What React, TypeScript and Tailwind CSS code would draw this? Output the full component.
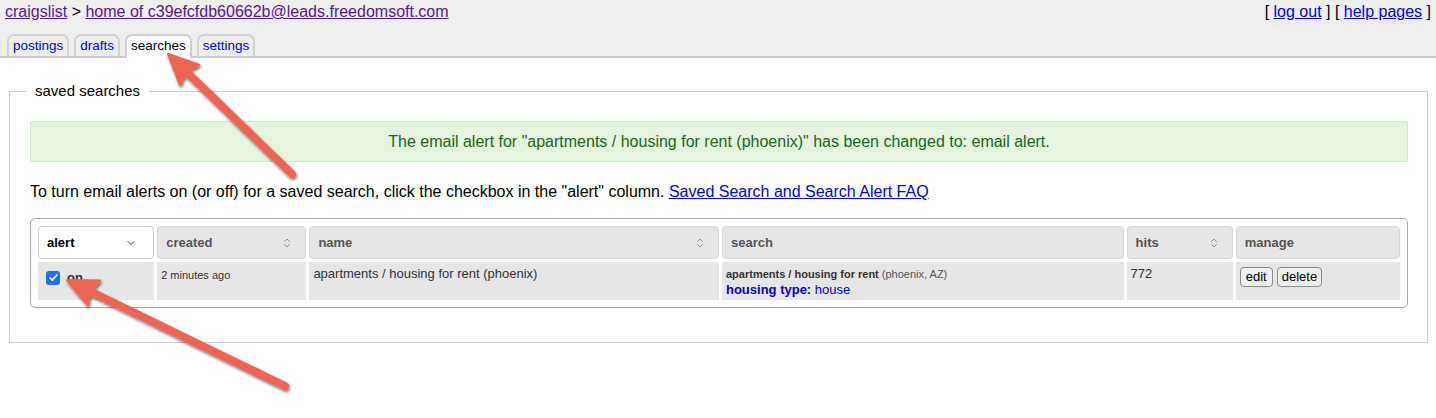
import React from 'react';
import { ChevronDown, ChevronsUpDown } from 'lucide-react';

const font = { fontFamily: '"Liberation Sans", Arial, Helvetica, sans-serif' };

type Pt = [number, number];

// annotation arrow drawn over the page
const Arrow: React.FC<{ tail: Pt; tip: Pt }> = ({ tail, tip }) => {
  const dx = tip[0] - tail[0];
  const dy = tip[1] - tail[1];
  const len = Math.hypot(dx, dy);
  const ux = dx / len;
  const uy = dy / len;
  const L = 30;
  const W = 14;
  const bx = tip[0] - ux * L;
  const by = tip[1] - uy * L;
  const pts = [
    `${tip[0]},${tip[1]}`,
    `${bx - uy * W},${by + ux * W}`,
    `${bx + ux * 4},${by + uy * 4}`,
    `${bx + uy * W},${by - ux * W}`,
  ].join(' ');
  return (
    <g filter="url(#shadow)">
      <line x1={tail[0]} y1={tail[1]} x2={bx + ux * 6} y2={by + uy * 6} stroke="#ef6453" strokeWidth={8} strokeLinecap="round" />
      <polygon points={pts} fill="#ef6453" stroke="#ef6453" strokeWidth={2} strokeLinejoin="round" />
    </g>
  );
};

const Tab: React.FC<{ label: string; active?: boolean }> = ({ label, active }) => (
  <div
    className={
      'px-[4px] border-2 border-b-0 rounded-t-[7px] text-[13.5px] leading-[16px] pt-[2px] ' +
      (active
        ? 'h-[24px] border-[#cfcfcf] bg-white text-black -mb-[2px]'
        : 'h-[22px] border-[#d2d2d2] bg-[#eeeeee] text-[#0000ee]')
    }
  >
    {label}
  </div>
);

const HeadCell: React.FC<{ label: string; icon?: 'down' | 'sort'; white?: boolean }> = ({ label, icon, white }) => (
  <th
    className={
      'h-[33px] px-[8px] text-left align-middle rounded-[4px] border ' +
      (white ? 'bg-white border-[#cfcfcf] text-black' : 'bg-[#e6e6e6] border-[#d8d8d8] text-[#555]')
    }
  >
    <div className="flex items-center justify-between">
      <span className="text-[13px] font-bold">{label}</span>
      {icon === 'down' && <ChevronDown className="w-[12px] h-[12px] mr-[8px] text-[#333]" strokeWidth={2} />}
      {icon === 'sort' && <ChevronsUpDown className="w-[12px] h-[12px] mr-[4px] text-[#777]" strokeWidth={1.5} />}
    </div>
  </th>
);

export default function App() {
  return (
    <div className="relative w-[1436px] h-[418px] bg-white text-black overflow-hidden" style={font}>
      <div className="bg-[#eeeeee] border-b-2 border-[#cccccc] h-[58px] flex flex-col justify-between">
        <div className="flex justify-between px-[5px] pt-[3px] text-[16px] leading-[18px]">
          <div>
            <a href="#" className="text-[#551a8b] underline">craigslist</a>
            <span> &gt; </span>
            <a href="#" className="text-[#551a8b] underline">home of c39efcfdb60662b@leads.freedomsoft.com</a>
          </div>
          <div>
            [ <a href="#" className="text-[#0000ee] underline">log out</a> ] [{' '}
            <a href="#" className="text-[#0000ee] underline">help pages</a> ]
          </div>
        </div>
        <div className="flex items-end gap-[5px] pl-[7px]">
          <Tab label="postings" />
          <Tab label="drafts" />
          <Tab label="searches" active />
          <Tab label="settings" />
        </div>
      </div>

      <fieldset className="mx-[9px] mt-[24px] border border-[#cccccc] pl-[20px] pr-[19px] pb-[34px] w-[1419px]">
        <legend className="ml-[-4px] px-[9px] text-[15px] leading-[18px]">saved searches</legend>

        <div className="mt-[21px] h-[41px] bg-[#e5f4df] border border-[#d0e9c6] rounded-[2px] flex items-center justify-center text-[16px] text-[#1c6619]">
          The email alert for "apartments / housing for rent (phoenix)" has been changed to: email alert.
        </div>

        <p className="mt-[21px] text-[16px] leading-[18px]">
          To turn email alerts on (or off) for a saved search, click the checkbox in the "alert" column.{' '}
          <a href="#" className="text-[#0000ee] underline">Saved Search and Search Alert FAQ</a>
        </p>

        <div className="mt-[17px] border border-[#aaaaaa] rounded-[5px] p-[4px]">
          <table className="w-full table-fixed border-separate border-spacing-[3px]">
            <colgroup>
              <col className="w-[116px]" />
              <col className="w-[149px]" />
              <col className="w-[409px]" />
              <col className="w-[401px]" />
              <col className="w-[106px]" />
              <col className="w-[164px]" />
            </colgroup>
            <thead>
              <tr>
                <HeadCell label="alert" icon="down" white />
                <HeadCell label="created" icon="sort" />
                <HeadCell label="name" icon="sort" />
                <HeadCell label="search" />
                <HeadCell label="hits" icon="sort" />
                <HeadCell label="manage" />
              </tr>
            </thead>
            <tbody>
              <tr className="align-top">
                <td className="h-[38px] bg-[#e6e6e6] pl-[8px] pt-[6px]">
                  <div className="flex items-center gap-[7px]">
                    <span className="w-[14px] h-[14px] rounded-[3px] bg-[#1a73e8] flex items-center justify-center">
                      <svg viewBox="0 0 12 12" className="w-[11px] h-[11px]">
                        <path d="M2.2 6.3 L4.8 8.8 L9.8 3.2" fill="none" stroke="white" strokeWidth="1.8" strokeLinecap="round" strokeLinejoin="round" />
                      </svg>
                    </span>
                    <span className="text-[13px] font-bold text-[#333]">on</span>
                  </div>
                </td>
                <td className="h-[38px] bg-[#e6e6e6] pl-[4px] pt-[6px] text-[11px] leading-[14px] text-[#333]">2 minutes ago</td>
                <td className="h-[38px] bg-[#e6e6e6] pl-[4px] pt-[4px] text-[13px] leading-[16px] text-[#333]">
                  apartments / housing for rent (phoenix)
                </td>
                <td className="h-[38px] bg-[#e6e6e6] pl-[4px] pt-[5px]">
                  <div className="text-[11px] leading-[14px] text-[#333]">
                    <span className="font-bold">apartments / housing for rent</span>{' '}
                    <span className="text-[#555]">(phoenix, AZ)</span>
                  </div>
                  <div className="mt-[1px] text-[13px] leading-[16px] text-[#0000cc]">
                    <span className="font-bold">housing type:</span> house
                  </div>
                </td>
                <td className="h-[38px] bg-[#e6e6e6] pl-[4px] pt-[4px] text-[13px] leading-[16px] text-[#333]">772</td>
                <td className="h-[38px] bg-[#e6e6e6] pl-[4px] pt-[5px]">
                  <div className="flex gap-[4px]">
                    <button className="h-[20px] px-[5px] border border-[#8a8a8a] rounded-[4px] bg-[#efefef] text-[13px] leading-[16px] text-black">edit</button>
                    <button className="h-[20px] px-[4px] border border-[#8a8a8a] rounded-[4px] bg-[#efefef] text-[13px] leading-[16px] text-black">delete</button>
                  </div>
                </td>
              </tr>
            </tbody>
          </table>
        </div>
      </fieldset>

      <svg className="absolute inset-0 pointer-events-none" width="1436" height="418">
        <defs>
          <filter id="shadow" x="-20%" y="-20%" width="140%" height="140%">
            <feDropShadow dx="1" dy="2" stdDeviation="1.5" floodColor="#000" floodOpacity="0.55" />
          </filter>
        </defs>
        <Arrow tail={[292, 174]} tip={[168, 54]} />
        <Arrow tail={[285, 386]} tip={[67, 280]} />
      </svg>
    </div>
  );
}
